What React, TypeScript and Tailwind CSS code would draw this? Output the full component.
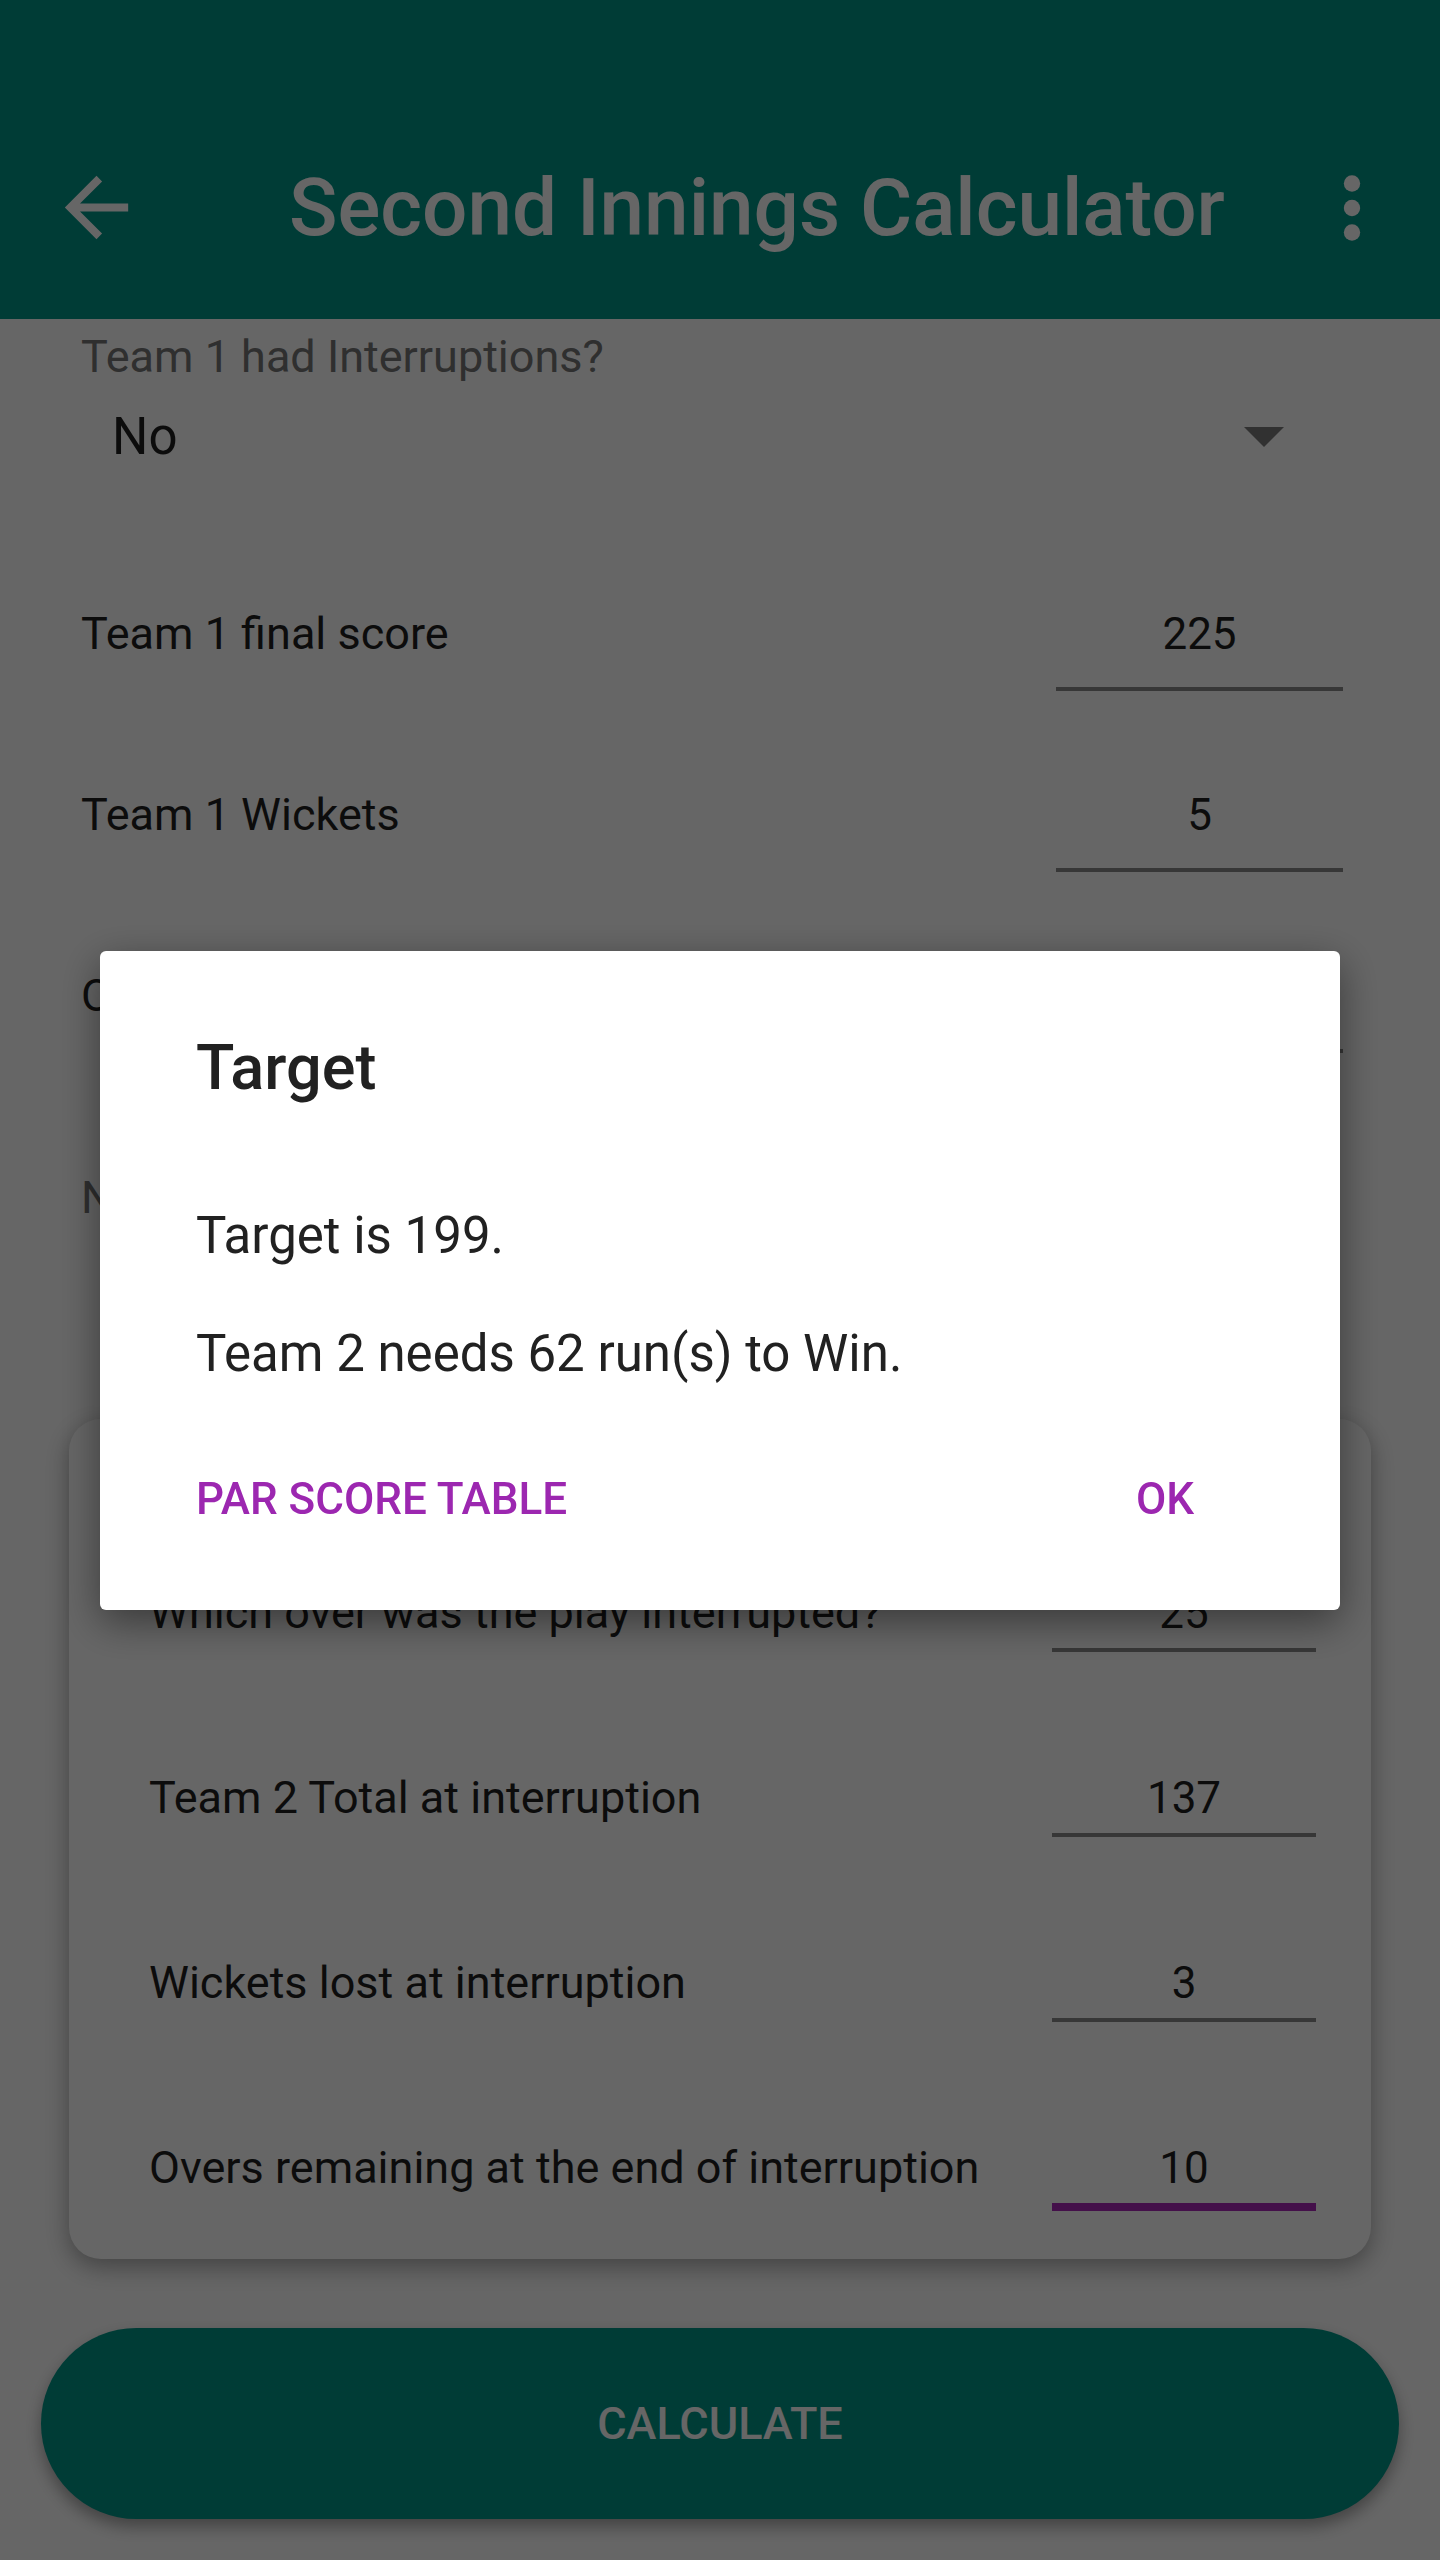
import React from "react";

const font = { fontFamily: "Roboto, 'Noto Sans', sans-serif" };

const TopRow = ({ label, value }: { label: string; value: string }) => (
  <div className="flex items-baseline justify-between pl-[81px] pr-[97px]">
    <span className="text-[45px] leading-[52px] text-[#1f1f1f]">{label}</span>
    <div className="w-[287px] border-b-4 border-[#8a8a8a] pb-[27px] text-center text-[44px] leading-[52px] text-[#1f1f1f]">
      {value}
    </div>
  </div>
);

const CardRow = ({ label, value, focused }: { label: string; value: string; focused?: boolean }) => (
  <div className="flex items-baseline justify-between pl-[80px] pr-[55px]">
    <span className="text-[45px] leading-[52px] text-[#1f1f1f]">{label}</span>
    <div
      className={
        focused
          ? "w-[264px] border-b-8 border-[#ab28b9] pb-[9px] text-center text-[44px] leading-[52px] text-[#1f1f1f]"
          : "w-[264px] border-b-4 border-[#8a8a8a] pb-[9px] text-center text-[44px] leading-[52px] text-[#1f1f1f]"
      }
    >
      {value}
    </div>
  </div>
);

export default function App() {
  return (
    <div className="relative min-h-[2560px] w-[1440px] bg-white" style={font}>
      {/* toolbar */}
      <header className="h-[319px] bg-[#009688] pt-[96px]">
        <div className="flex h-[223px] items-center">
          <div className="ml-[49px] h-[95px] w-[95px]">
            <svg viewBox="0 0 24 24" className="h-full w-full" fill="white">
              <path d="M20 11H7.83l5.59-5.59L12 4l-8 8 8 8 1.41-1.41L7.83 13H20v-2z" />
            </svg>
          </div>
          <h1 className="ml-[145px] flex-1 text-[80px] font-medium leading-none text-white">Second Innings Calculator</h1>
          <div className="mr-[39px] h-[98px] w-[98px]">
            <svg viewBox="0 0 24 24" className="h-full w-full" fill="white">
              <circle cx="12" cy="6" r="2" />
              <circle cx="12" cy="12" r="2" />
              <circle cx="12" cy="18" r="2" />
            </svg>
          </div>
        </div>
      </header>

      {/* first innings */}
      <section className="pt-[11px]">
        <div className="pl-[81px] text-[45px] leading-[54px] text-[#757575]">Team 1 had Interruptions?</div>
        <div className="mt-[23px] flex h-[60px] items-center pl-[112px] pr-[156px]">
          <span className="flex-1 text-[51px] leading-[60px] text-[#1f1f1f]">No</span>
          <svg viewBox="0 0 40 20" className="h-[20px] w-[40px]">
            <polygon points="0,0 40,0 20,20" fill="#7a7a7a" />
          </svg>
        </div>

        <div className="mt-[141px] flex flex-col gap-[98px]">
          <TopRow label="Team 1 final score" value="225" />
          <TopRow label="Team 1 Wickets" value="5" />
          <TopRow label="Overs per innings" value="50" />
        </div>

        <div className="mt-[118px] pl-[81px] text-[45px] leading-[54px] text-[#757575]">Number of interruptions?</div>
      </section>

      {/* interruption card */}
      <div className="mx-[69px] mt-[194px] rounded-[32px] bg-white pb-[48px] pt-[168px] shadow-[0_8px_24px_rgba(0,0,0,0.35)]">
        <div className="flex flex-col gap-[120px]">
          <CardRow label="Which over was the play interrupted?" value="25" />
          <CardRow label="Team 2 Total at interruption" value="137" />
          <CardRow label="Wickets lost at interruption" value="3" />
          <CardRow label="Overs remaining at the end of interruption" value="10" focused />
        </div>
      </div>

      <div className="px-[41px] pt-[69px]">
        <button className="flex h-[191px] w-full items-center justify-center rounded-full bg-[#009688] text-[45px] font-medium text-white shadow-[0_8px_16px_rgba(0,0,0,0.35)]">
          CALCULATE
        </button>
      </div>

      {/* scrim + dialog */}
      <div className="fixed inset-0 flex items-center justify-center bg-black/60">
        <div className="w-[1240px] rounded-[6px] bg-white pb-[85px] pl-[96px] pr-[40px] pt-[80px] shadow-[0_12px_40px_rgba(0,0,0,0.45)]">
          <h2 className="text-[63px] font-medium leading-[74px] text-[#212121]">Target</h2>
          <p className="mt-[101px] text-[51px] leading-[60px] text-[#212121]">Target is 199.</p>
          <p className="mt-[58px] text-[51px] leading-[60px] text-[#212121]">Team 2 needs 62 run(s) to Win.</p>
          <div className="mt-[89px] flex items-center justify-between pr-[106px]">
            <span className="text-[44px] font-medium leading-[52px] text-[#9c27b0]">PAR SCORE TABLE</span>
            <span className="text-[44px] font-medium leading-[52px] text-[#9c27b0]">OK</span>
          </div>
        </div>
      </div>
    </div>
  );
}
